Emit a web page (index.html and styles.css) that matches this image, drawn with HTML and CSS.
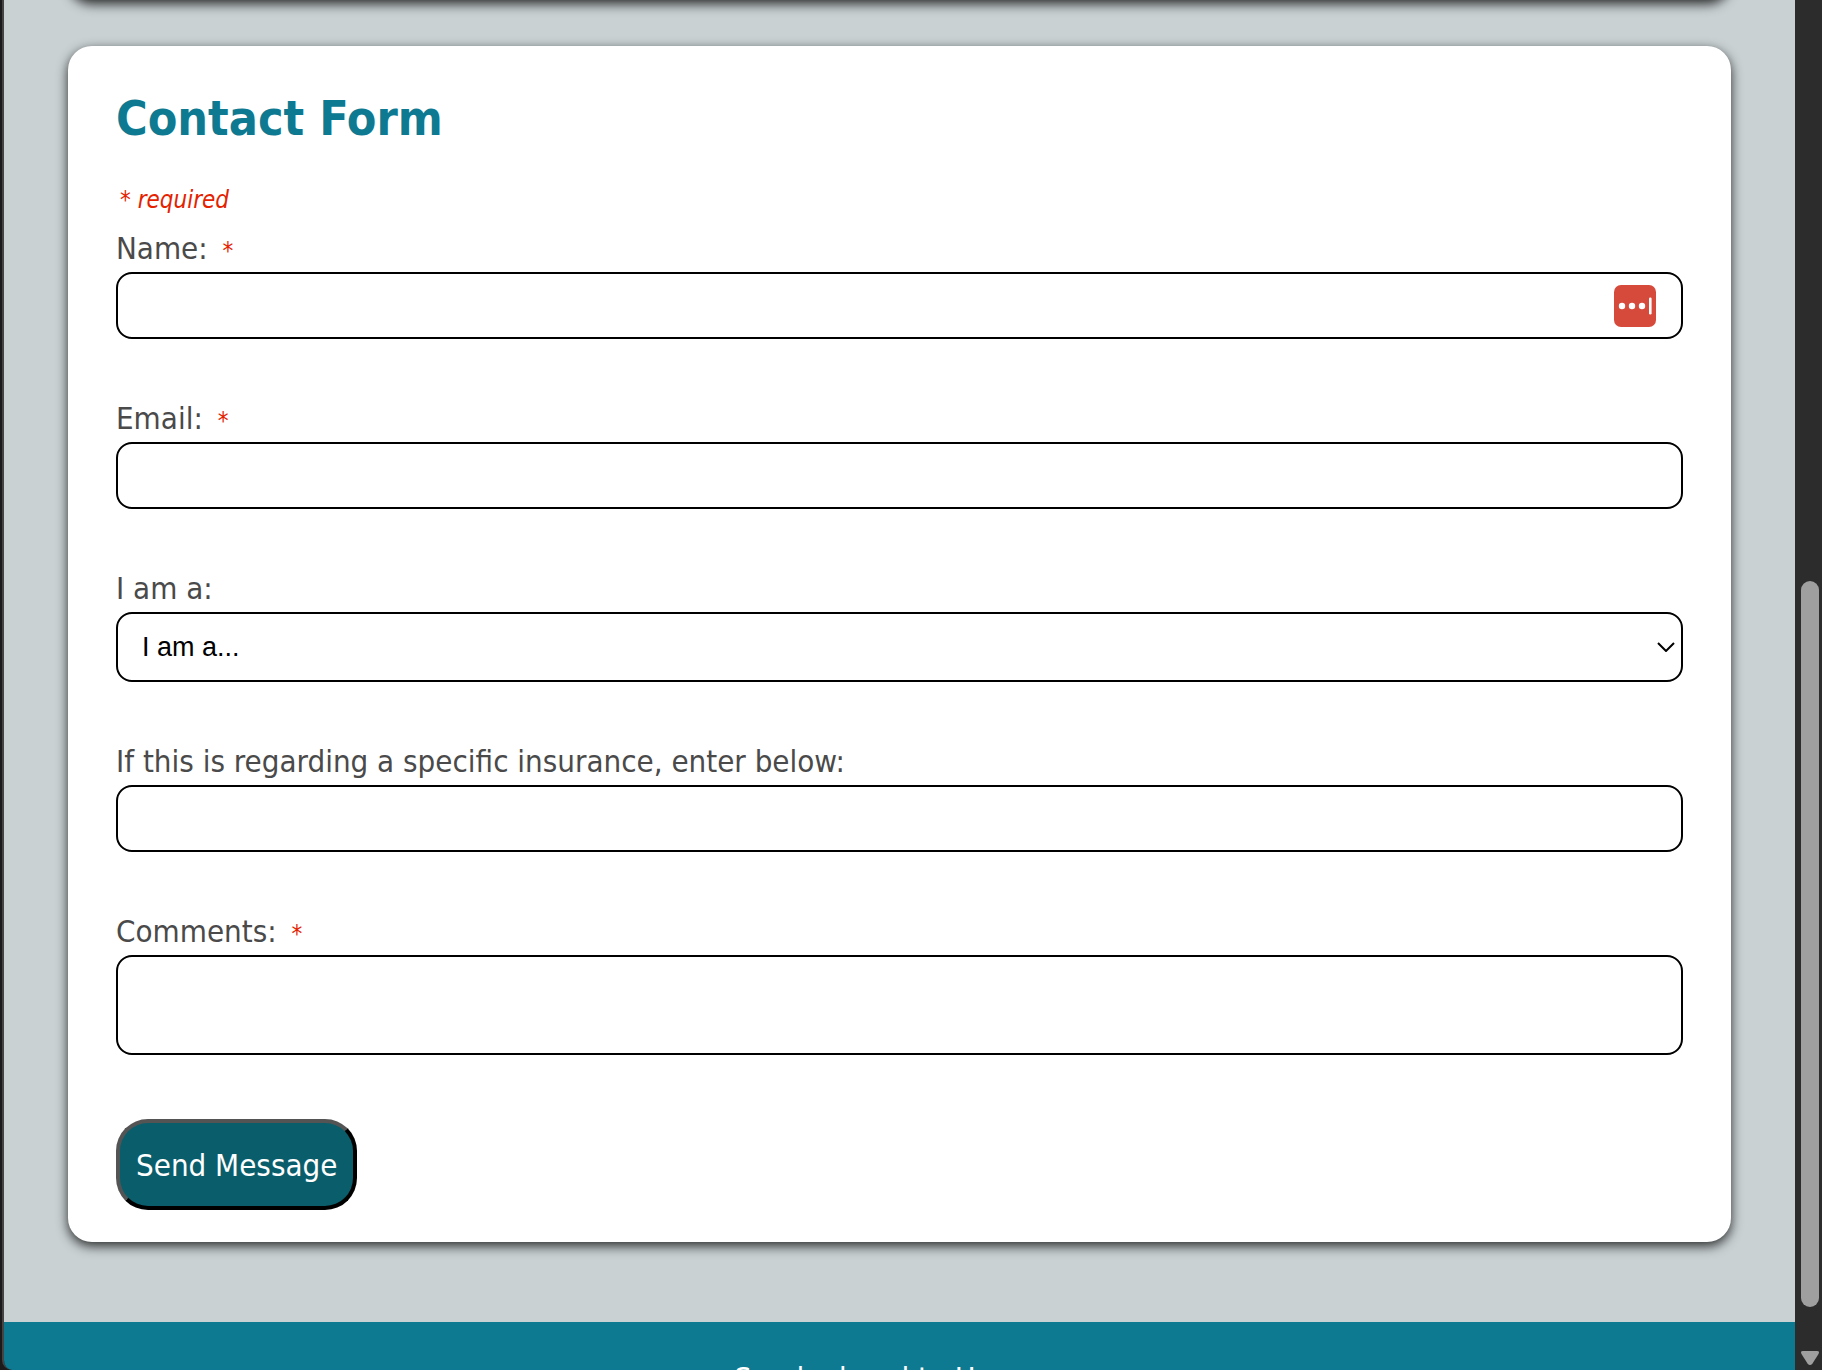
FILE: index.html
```
<!DOCTYPE html>
<html lang="en">
<head>
<meta charset="utf-8">
<title>Contact Form</title>
<link rel="stylesheet" href="styles.css">
</head>
<body>
<div class="window">
  <div class="page">
    <div class="content">
      <section class="card card-previous"></section>
      <main class="card">
        <h1 class="title">Contact Form</h1>
        <form class="form">
          <p class="note">* required</p>
          <div class="field">
            <label class="label" for="name">Name: <span class="star">*</span></label>
            <div class="control">
              <input class="input" id="name" type="text" required>
              <svg class="manager" viewBox="0 0 42 42" aria-hidden="true">
                <rect width="42" height="42" rx="7" fill="#d64a3b"/>
                <circle cx="8" cy="21" r="3.2" fill="#fff"/>
                <circle cx="18" cy="21" r="3.2" fill="#fff"/>
                <circle cx="28" cy="21" r="3.2" fill="#fff"/>
                <rect x="35" y="12.500" width="2.6" height="17" rx="1.3" fill="#fff"/>
              </svg>
            </div>
          </div>
          <div class="field">
            <label class="label" for="email">Email: <span class="star">*</span></label>
            <input class="input" id="email" type="email" required>
          </div>
          <div class="field">
            <label class="label" for="role">I am a:</label>
            <div class="control">
              <select class="input select" id="role"><option>I am a...</option></select>
              <svg class="chevron" viewBox="0 0 18 10" aria-hidden="true"><path d="M1 1l8 8 8-8" fill="none" stroke="#000" stroke-width="2"/></svg>
            </div>
          </div>
          <div class="field">
            <label class="label" for="insurance">If this is regarding a specific insurance, enter below:</label>
            <input class="input" id="insurance" type="text">
          </div>
          <div class="field">
            <label class="label" for="comments">Comments: <span class="star">*</span></label>
            <textarea class="input comments" id="comments" required></textarea>
          </div>
          <button class="send" type="submit">Send Message</button>
        </form>
      </main>
    </div>
    <footer class="footer">Send a hand to Us soon</footer>
  </div>
  <div class="scrollbar" aria-hidden="true">
    <div class="thumb"></div>
    <svg class="arrow" viewBox="0 0 18 14"><path d="M2 0h14q3 0 1.500 3l-6 9.500q-2.500 3-5 0l-6-9.500q-1.500-3 1.500-3z" fill="#9f9f9f"/></svg>
  </div>
</div>
</body>
</html>
```
FILE: styles.css
```
* {
  box-sizing: border-box;
}

body {
  margin: 0;
  background: #1c1b1b;
  color: #4a4a4a;
  font-family: Tahoma, "DejaVu Sans Condensed", "Noto Sans", sans-serif;
  font-size: 31px;
  line-height: 32px;
}

.window {
  display: flex;
  height: 100vh;
  overflow: hidden;
  margin-left: 2px;
  border-left: 2px solid #464343;
  border-bottom-left-radius: 10px;
}

.page {
  flex: 1;
  display: flex;
  flex-direction: column;
  overflow: hidden;
}

.content {
  flex: none;
  padding: 0 64px 80px;
  background: #c9d1d3;
}

.card {
  padding: 48px 48px 32px;
  border-radius: 24px;
  background: #fff;
  box-shadow: 0 4px 12px rgba(0, 0, 0, 0.8);
}

.card-previous {
  height: 80px;
  margin: -80px 0 46px;
}

.title {
  margin: 0 0 40px;
  color: #0d7a92;
  font-size: 48px;
  line-height: 48px;
}

.note,
.star {
  color: #e42200;
  font-size: 24px;
  font-style: italic;
}

.note {
  margin: 0 0 15px;
  padding-left: 4px;
  line-height: 36px;
}

.field {
  margin-bottom: 64px;
}

.label {
  display: block;
  margin-bottom: 9px;
  line-height: 30px;
}

.star {
  padding-left: 6px;
  line-height: 20px;
}

.control {
  position: relative;
}

.input {
  display: block;
  width: 100%;
  height: 67px;
  padding: 0 24px;
  border: 2px solid #000;
  border-radius: 16px;
  background: #fff;
  color: #000;
  font-family: Arial, "Liberation Sans", sans-serif;
  font-size: 27px;
}

.select {
  height: 70px;
  appearance: none;
}

.comments {
  height: 100px;
  padding: 16px 24px;
  resize: none;
}

.manager {
  position: absolute;
  top: 13px;
  right: 27px;
  width: 42px;
  height: 42px;
}

.chevron {
  position: absolute;
  top: 30px;
  right: 8px;
  width: 18px;
  height: 10px;
}

.send {
  display: block;
  height: 91px;
  padding: 0 16px;
  border: 4px outset #000;
  border-radius: 32px;
  background: #0a5e6b;
  color: #fff;
  font: inherit;
}

.footer {
  flex: none;
  padding: 40px 0;
  background: #0d7a92;
  color: #fff;
  text-align: center;
}

.scrollbar {
  display: flex;
  flex-direction: column;
  align-items: center;
  justify-content: flex-end;
  width: 27px;
  padding-left: 3px;
  background: #2c2c2c;
}

.thumb {
  width: 18px;
  height: 53vh;
  border-radius: 9px;
  background: #9f9f9f;
}

.arrow {
  width: 18px;
  height: 14px;
  margin: 44px 0 5px;
}
```
